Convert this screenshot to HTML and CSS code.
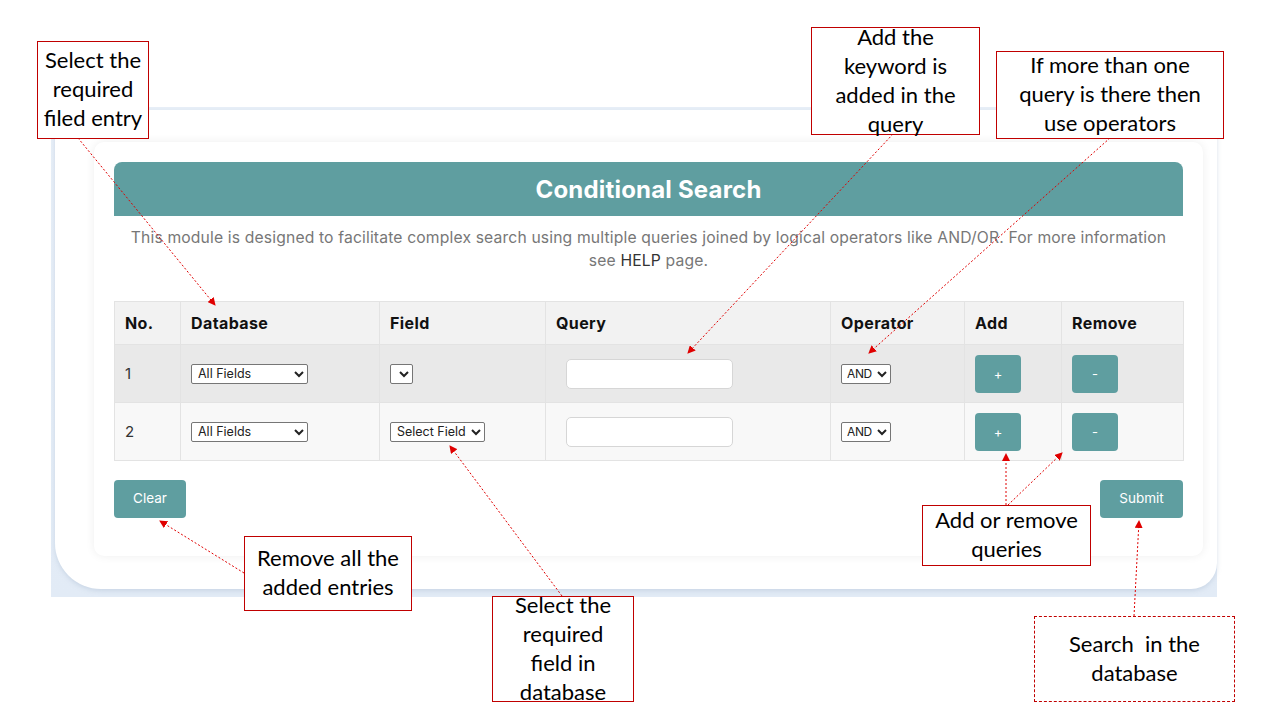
FILE: index.html
```html
<!DOCTYPE html>
<html>
<head>
<meta charset="utf-8">
<link rel="stylesheet" href="styles.css">
</head>
<body>
<div class="frame">
  <div class="panel">
    <div class="card">
      <div class="card-head">Conditional Search</div>
      <p class="desc">This module is designed to facilitate complex search using multiple queries joined by logical operators like AND/OR. For more information see <span class="help">HELP</span> page.</p>
      <table class="qtable">
        <colgroup>
          <col class="c-no"><col class="c-db"><col class="c-field"><col class="c-query"><col class="c-op"><col class="c-add"><col class="c-rem">
        </colgroup>
        <thead>
          <tr><th>No.</th><th>Database</th><th>Field</th><th>Query</th><th>Operator</th><th>Add</th><th>Remove</th></tr>
        </thead>
        <tbody>
          <tr class="row-a">
            <td>1</td>
            <td><select class="sel sel-db"><option>All Fields</option></select></td>
            <td><select class="sel sel-empty"><option></option></select></td>
            <td><input class="qinput" type="text"></td>
            <td><select class="sel sel-op"><option>AND</option></select></td>
            <td><button class="btn btn-sq">+</button></td>
            <td><button class="btn btn-sq">-</button></td>
          </tr>
          <tr class="row-b">
            <td>2</td>
            <td><select class="sel sel-db"><option>All Fields</option></select></td>
            <td><select class="sel sel-field"><option>Select Field</option></select></td>
            <td><input class="qinput" type="text"></td>
            <td><select class="sel sel-op"><option>AND</option></select></td>
            <td><button class="btn btn-sq">+</button></td>
            <td><button class="btn btn-sq">-</button></td>
          </tr>
        </tbody>
      </table>
      <div class="actions">
        <button class="btn btn-clear">Clear</button>
        <button class="btn btn-submit">Submit</button>
      </div>
    </div>
  </div>
</div>

<svg class="arrows" width="1280" height="720" viewBox="0 0 1280 720">
  <defs>
    <marker id="ah" markerWidth="8" markerHeight="8" refX="7" refY="4" orient="auto" markerUnits="userSpaceOnUse">
      <path d="M0,0 L8,4 L0,8 Z" fill="#e00000"/>
    </marker>
  </defs>
  <g stroke="#e00000" stroke-width="1" stroke-dasharray="2 2" fill="none">
    <line x1="78" y1="138" x2="215" y2="305" marker-end="url(#ah)"/>
    <line x1="893" y1="134" x2="688" y2="353" marker-end="url(#ah)"/>
    <line x1="1110" y1="138" x2="869" y2="353" marker-end="url(#ah)"/>
    <line x1="244" y1="573" x2="160" y2="521" marker-end="url(#ah)"/>
    <line x1="562" y1="596" x2="450" y2="446" marker-end="url(#ah)"/>
    <line x1="1006" y1="505" x2="1006" y2="454" marker-end="url(#ah)"/>
    <line x1="1008" y1="505" x2="1062" y2="453" marker-end="url(#ah)"/>
    <line x1="1134" y1="616" x2="1139" y2="521" marker-end="url(#ah)"/>
  </g>
</svg>

<div class="callout co-1"><div class="co-text">Select the<br>required<br>filed entry</div></div>
<div class="callout co-2"><div class="co-text">Add the<br>keyword is<br>added in the<br>query</div></div>
<div class="callout co-3"><div class="co-text">If more than one<br>query is there then<br>use operators</div></div>
<div class="callout co-4"><div class="co-text">Remove all the<br>added entries</div></div>
<div class="callout co-5"><div class="co-text">Select the<br>required<br>field in<br>database</div></div>
<div class="callout co-6"><div class="co-text">Add or remove<br>queries</div></div>
<div class="callout co-7"><div class="co-text">Search&nbsp; in the<br>database</div></div>
</body>
</html>
```
FILE: styles.css
```css
* { box-sizing: border-box; }
html, body { margin: 0; padding: 0; }
body {
  width: 1280px;
  height: 720px;
  background: #ffffff;
  font-family: "Inter", "Noto Sans", sans-serif;
  overflow: hidden;
}

.frame {
  margin: 107px 0 0 51px;
  width: 1166px;
  height: 490px;
  background: linear-gradient(#e8eff8, #e2ebf6);
  padding: 3px 0 8px 4px;
}

.panel {
  height: 479px;
  background: #ffffff;
  border-radius: 26px 22px 26px 46px;
  padding: 32px 14px 0 39px;
  box-shadow: 0 2px 4px rgba(180, 195, 215, 0.5);
}

.card {
  width: 1109px;
  height: 414px;
  background: #fff;
  border-radius: 10px;
  box-shadow: 0 0 10px rgba(0, 0, 0, 0.07);
  padding: 20px 20px 0 20px;
}

.card-head {
  height: 54px;
  background: #5f9ea0;
  border-radius: 8px 8px 0 0;
  color: #fff;
  font-weight: 700;
  font-size: 24px;
  letter-spacing: 0.2px;
  display: flex;
  align-items: center;
  justify-content: center;
}

.desc {
  margin: 10px 8px 0;
  text-align: center;
  color: #777;
  font-size: 15.7px;
  line-height: 23px;
  letter-spacing: 0.15px;
}
.help { color: #333; }

.qtable {
  margin-top: 29px;
  width: 1069px;
  border-collapse: collapse;
  table-layout: fixed;
  font-size: 15px;
}
.c-no { width: 66px; }
.c-db { width: 199px; }
.c-field { width: 166px; }
.c-query { width: 285px; }
.c-op { width: 134px; }
.c-add { width: 97px; }
.c-rem { width: 122px; }

.qtable th, .qtable td {
  border: 1px solid #e3e3e3;
  padding: 0 10px;
  text-align: left;
  color: #222;
}
.qtable th {
  height: 43px;
  background: #f2f2f2;
  font-weight: 700;
  font-size: 16px;
  letter-spacing: 0.4px;
  color: #111;
}
.qtable td { height: 58px; color: #333; }
.row-a td { background: #e9e9e9; }
.row-b td { background: #f8f8f8; }

.sel {
  font-family: "Inter", "Noto Sans", sans-serif;
  font-size: 12.5px;
  height: 20px;
  padding: 0 2px;
  border: 1px solid #767676;
  border-radius: 2px;
  background: #fff;
  color: #222;
  vertical-align: middle;
}
.sel-db { width: 117px; }
.sel-empty { width: 23px; }
.sel-field { width: 95px; }
.sel-op {
  width: 50px;
  padding: 0 0 0 1px;
  font-size: 12px;
  letter-spacing: -0.4px;
}

.qinput {
  margin-left: 10px;
  width: 167px;
  height: 30px;
  border: 1px solid #d6d6d6;
  border-radius: 5px;
  background: #fff;
  vertical-align: middle;
}

.btn {
  background: #5f9ea0;
  color: #fff;
  border: none;
  border-radius: 4px;
  font-family: "Inter", "Noto Sans", sans-serif;
  cursor: pointer;
}
.btn-sq {
  width: 46px;
  height: 38px;
  font-size: 13px;
  vertical-align: middle;
  padding: 0;
}

.actions {
  margin-top: 19px;
  display: flex;
  justify-content: space-between;
}
.btn-clear { width: 72px; height: 38px; font-size: 13.5px; padding-bottom: 3px; }
.btn-submit { width: 83px; height: 38px; font-size: 13.5px; padding-bottom: 3px; }

.arrows {
  position: absolute;
  left: 0;
  top: 0;
  pointer-events: none;
}

.callout {
  position: absolute;
  background: #fff;
  border: 1px solid #c00000;
  font-family: "Lato", "Open Sans", sans-serif;
  font-size: 22px;
  line-height: 29px;
  color: #000;
  text-align: center;
  white-space: nowrap;
}
.co-1 { left: 37px; top: 41px; width: 112px; height: 98px; }
.co-1 .co-text { margin-top: 3px; }
.co-2 { left: 811px; top: 27px; width: 169px; height: 108px; }
.co-2 .co-text { margin-top: -6px; }
.co-3 { left: 996px; top: 51px; width: 228px; height: 88px; }
.co-3 .co-text { margin-top: -2px; }
.co-4 { left: 244px; top: 536px; width: 168px; height: 75px; }
.co-4 .co-text { margin-top: 6px; }
.co-5 { left: 492px; top: 596px; width: 142px; height: 106px; }
.co-5 .co-text { margin-top: -7px; }
.co-6 { left: 922px; top: 505px; width: 169px; height: 61px; }
.co-6 .co-text { margin-top: -1px; }
.co-7 { left: 1034px; top: 616px; width: 201px; height: 86px; border-style: dashed; }
.co-7 .co-text { margin-top: 12px; }
```
